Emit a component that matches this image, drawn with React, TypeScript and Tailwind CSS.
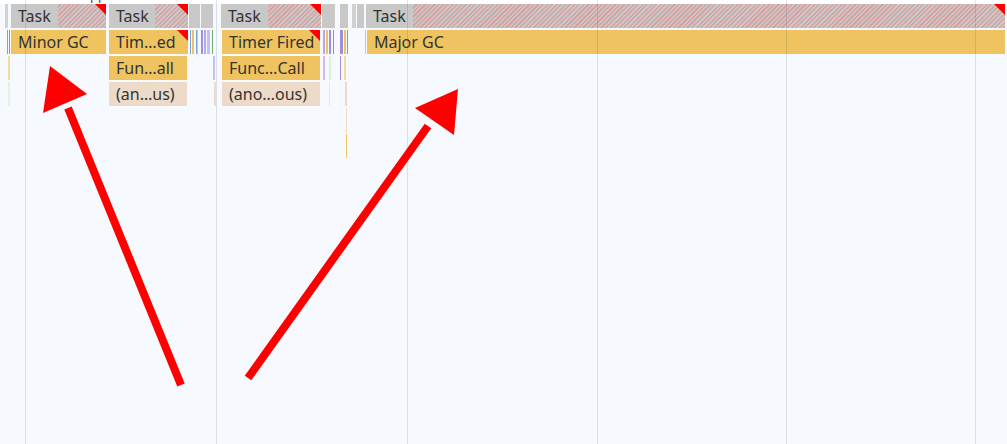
type Bar = {
  x: number;
  w: number;
  kind: "task" | "script" | "anon" | "thin";
  label?: string;
  hatch?: number;
  flag?: boolean;
  color?: string;
};

const kindClass: Record<Bar["kind"], string> = {
  task: "bg-[#c8c8c8]",
  script: "bg-[#efc460]",
  anon: "bg-[#eddac8]",
  thin: "",
};

const rows: Bar[][] = [
  [
    { x: 5, w: 3, kind: "thin", color: "#d2d2d2" },
    { x: 11, w: 95, kind: "task", label: "Task", hatch: 47, flag: true },
    { x: 109, w: 79, kind: "task", label: "Task", hatch: 46, flag: true },
    { x: 189, w: 11, kind: "thin", color: "#c8c8c8" },
    { x: 201, w: 12, kind: "thin", color: "#c8c8c8" },
    { x: 221, w: 100, kind: "task", label: "Task", hatch: 47, flag: true },
    { x: 322, w: 13, kind: "thin", color: "#c8c8c8" },
    { x: 340, w: 8, kind: "thin", color: "#c8c8c8" },
    { x: 352, w: 4, kind: "thin", color: "#d0d0d0" },
    { x: 357, w: 7, kind: "thin", color: "#c8c8c8" },
    { x: 366, w: 639, kind: "task", label: "Task", hatch: 47, flag: true },
  ],
  [
    { x: 7, w: 1, kind: "thin", color: "#9d8ee0" },
    { x: 9, w: 1, kind: "thin", color: "#6fb36f" },
    { x: 11, w: 95, kind: "script", label: "Minor GC" },
    { x: 109, w: 79, kind: "script", label: "Tim…ed", flag: true },
    { x: 190, w: 1, kind: "thin", color: "#7aa6e0" },
    { x: 192, w: 2, kind: "thin", color: "#efc460" },
    { x: 196, w: 1, kind: "thin", color: "#7aa6e0" },
    { x: 197, w: 1, kind: "thin", color: "#efc460" },
    { x: 201, w: 2, kind: "thin", color: "#9d8ee0" },
    { x: 204, w: 2, kind: "thin", color: "#b4a8ec" },
    { x: 207, w: 3, kind: "thin", color: "#c7bdf2" },
    { x: 212, w: 1, kind: "thin", color: "#6fb36f" },
    { x: 222, w: 98, kind: "script", label: "Timer Fired", flag: true },
    { x: 323, w: 2, kind: "thin", color: "#b4a8ec" },
    { x: 326, w: 2, kind: "thin", color: "#efc460" },
    { x: 329, w: 2, kind: "thin", color: "#9d8ee0" },
    { x: 333, w: 1, kind: "thin", color: "#6fb36f" },
    { x: 340, w: 3, kind: "thin", color: "#9d8ee0" },
    { x: 344, w: 2, kind: "thin", color: "#efc460" },
    { x: 347, w: 1, kind: "thin", color: "#6fb36f" },
    { x: 365, w: 1, kind: "thin", color: "#efc460" },
    { x: 367, w: 638, kind: "script", label: "Major GC" },
  ],
  [
    { x: 8, w: 2, kind: "thin", color: "#f3dc9e" },
    { x: 109, w: 78, kind: "script", label: "Fun…all" },
    { x: 213, w: 2, kind: "thin", color: "#c7bdf2" },
    { x: 222, w: 98, kind: "script", label: "Func…Call" },
    { x: 323, w: 2, kind: "thin", color: "#c7bdf2" },
    { x: 329, w: 2, kind: "thin", color: "#d9f0d9" },
    { x: 340, w: 1, kind: "thin", color: "#9d8ee0" },
    { x: 344, w: 2, kind: "thin", color: "#f3dc9e" },
  ],
  [
    { x: 8, w: 2, kind: "thin", color: "#e8f0e0" },
    { x: 109, w: 78, kind: "anon", label: "(an…us)" },
    { x: 214, w: 2, kind: "thin", color: "#eddac8" },
    { x: 222, w: 98, kind: "anon", label: "(ano…ous)" },
    { x: 329, w: 1, kind: "thin", color: "#eee6df" },
    { x: 345, w: 2, kind: "thin", color: "#eddac8" },
  ],
  [{ x: 346, w: 1, kind: "thin", color: "#eddac8" }],
  [{ x: 346, w: 1, kind: "thin", color: "#efc460" }],
];

const gridLines = [25, 216, 407, 597, 786, 975];

function Flag() {
  return (
    <div className="absolute right-0 top-0 h-[11px] w-[11px] bg-[#ff0000] [clip-path:polygon(0_0,100%_0,100%_100%)]" />
  );
}

function FlameBar({ bar }: { bar: Bar }) {
  if (bar.kind === "thin") {
    return (
      <div
        className="absolute top-0 h-full"
        style={{ left: bar.x, width: bar.w, background: bar.color }}
      />
    );
  }
  return (
    <div
      className={`absolute top-0 h-full overflow-hidden ${kindClass[bar.kind]}`}
      style={{ left: bar.x, width: bar.w }}
    >
      {bar.hatch !== undefined && (
        <div
          className="absolute inset-y-0 right-0 bg-[repeating-linear-gradient(-45deg,#d9a3a3_0_1.6px,#c8c8c8_1.6px_3.2px)]"
          style={{ left: bar.hatch }}
        />
      )}
      {bar.flag && <Flag />}
      <span className="relative block whitespace-nowrap pl-[7px] text-[16px] leading-[24px] text-[#333333]">
        {bar.label}
      </span>
    </div>
  );
}

export default function App() {
  return (
    <div className="relative h-[444px] w-[1007px] overflow-hidden bg-[#f6f9fe] font-['Noto_Sans',sans-serif]">
      <div className="relative h-[4px] overflow-hidden bg-white">
        <span className="absolute left-[90px] top-[-13px] text-[13px] leading-[16px] text-[#444]">pp</span>
      </div>

      <div className="flex flex-col gap-[2px]">
        {rows.map((row, i) => (
          <div key={i} className="relative h-[24px]">
            {row.map((bar, j) => (
              <FlameBar key={j} bar={bar} />
            ))}
          </div>
        ))}
      </div>

      {gridLines.map((x) => (
        <div
          key={x}
          className="pointer-events-none absolute inset-y-0 w-px bg-[rgba(40,50,70,0.13)]"
          style={{ left: x }}
        />
      ))}

      <svg className="pointer-events-none absolute inset-0" width="1007" height="444">
        <line x1="181" y1="385" x2="68" y2="108" stroke="#ff0000" strokeWidth="8" />
        <polygon points="50,66 43,113 87,94" fill="#ff0000" />
        <line x1="248" y1="378" x2="428" y2="126" stroke="#ff0000" strokeWidth="8" />
        <polygon points="458,89 415,108 454,135" fill="#ff0000" />
      </svg>
    </div>
  );
}
